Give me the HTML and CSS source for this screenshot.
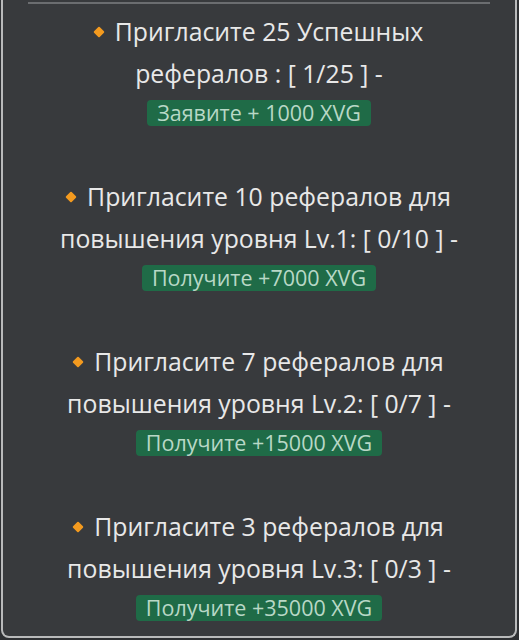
FILE: index.html
```html
<!DOCTYPE html>
<html lang="ru">
<head>
  <meta charset="UTF-8">
  <title>Рефералы</title>
  <link rel="stylesheet" href="styles.css">
</head>
<body>

  <div class="panel">
    <hr class="divider">

    <div class="task">
      <p class="task-text"><span class="dot"></span>Пригласите 25 Успешных рефералов : [ 1/25 ] -</p>
      <span class="reward">Заявите + 1000 XVG</span>
    </div>

    <div class="task">
      <p class="task-text"><span class="dot"></span>Пригласите 10 рефералов для повышения уровня Lv.1: [ 0/10 ] -</p>
      <span class="reward">Получите +7000 XVG</span>
    </div>

    <div class="task">
      <p class="task-text"><span class="dot"></span>Пригласите 7 рефералов для повышения уровня Lv.2: [ 0/7 ] -</p>
      <span class="reward">Получите +15000 XVG</span>
    </div>

    <div class="task">
      <p class="task-text"><span class="dot"></span>Пригласите 3 рефералов для повышения уровня Lv.3: [ 0/3 ] -</p>
      <span class="reward">Получите +35000 XVG</span>
    </div>
  </div>

</body>
</html>
```

FILE: styles.css
```css
body {
  margin: 0;
  background: #2e3033;
  font-family: "Open Sans", "Noto Sans", sans-serif;
}
.panel {
  background: #383a3d;
  border: 2px solid #b9babb;
  border-top: none;
  border-radius: 0 0 8px 8px;
  margin: 0 2px 0 1px;
  height: 638px;
  box-sizing: border-box;
  padding: 0 25px;
  text-align: center;
}
.divider {
  margin: 0;
  position: relative;
  top: 2px;
  border: none;
  height: 2px;
  background: #6b6d70;
}
.task {
  padding: 8px 8px 0;
  height: 157px;
}
.task-text {
  margin: 0;
  font-size: 24.8px;
  line-height: 42px;
  color: #e8e8e8;
}
.dot {
  display: inline-block;
  width: 8px;
  height: 8px;
  background: #f39a1f;
  transform: rotate(45deg);
  border-radius: 1px;
  margin: 0 12px 4px 0;
  vertical-align: middle;
}
.reward {
  display: inline-block;
  margin-top: 6px;
  padding: 0 10px;
  background: #1f6b47;
  color: #b8d8c6;
  font-size: 21.5px;
  line-height: 26px;
  border-radius: 4px;
}
```
